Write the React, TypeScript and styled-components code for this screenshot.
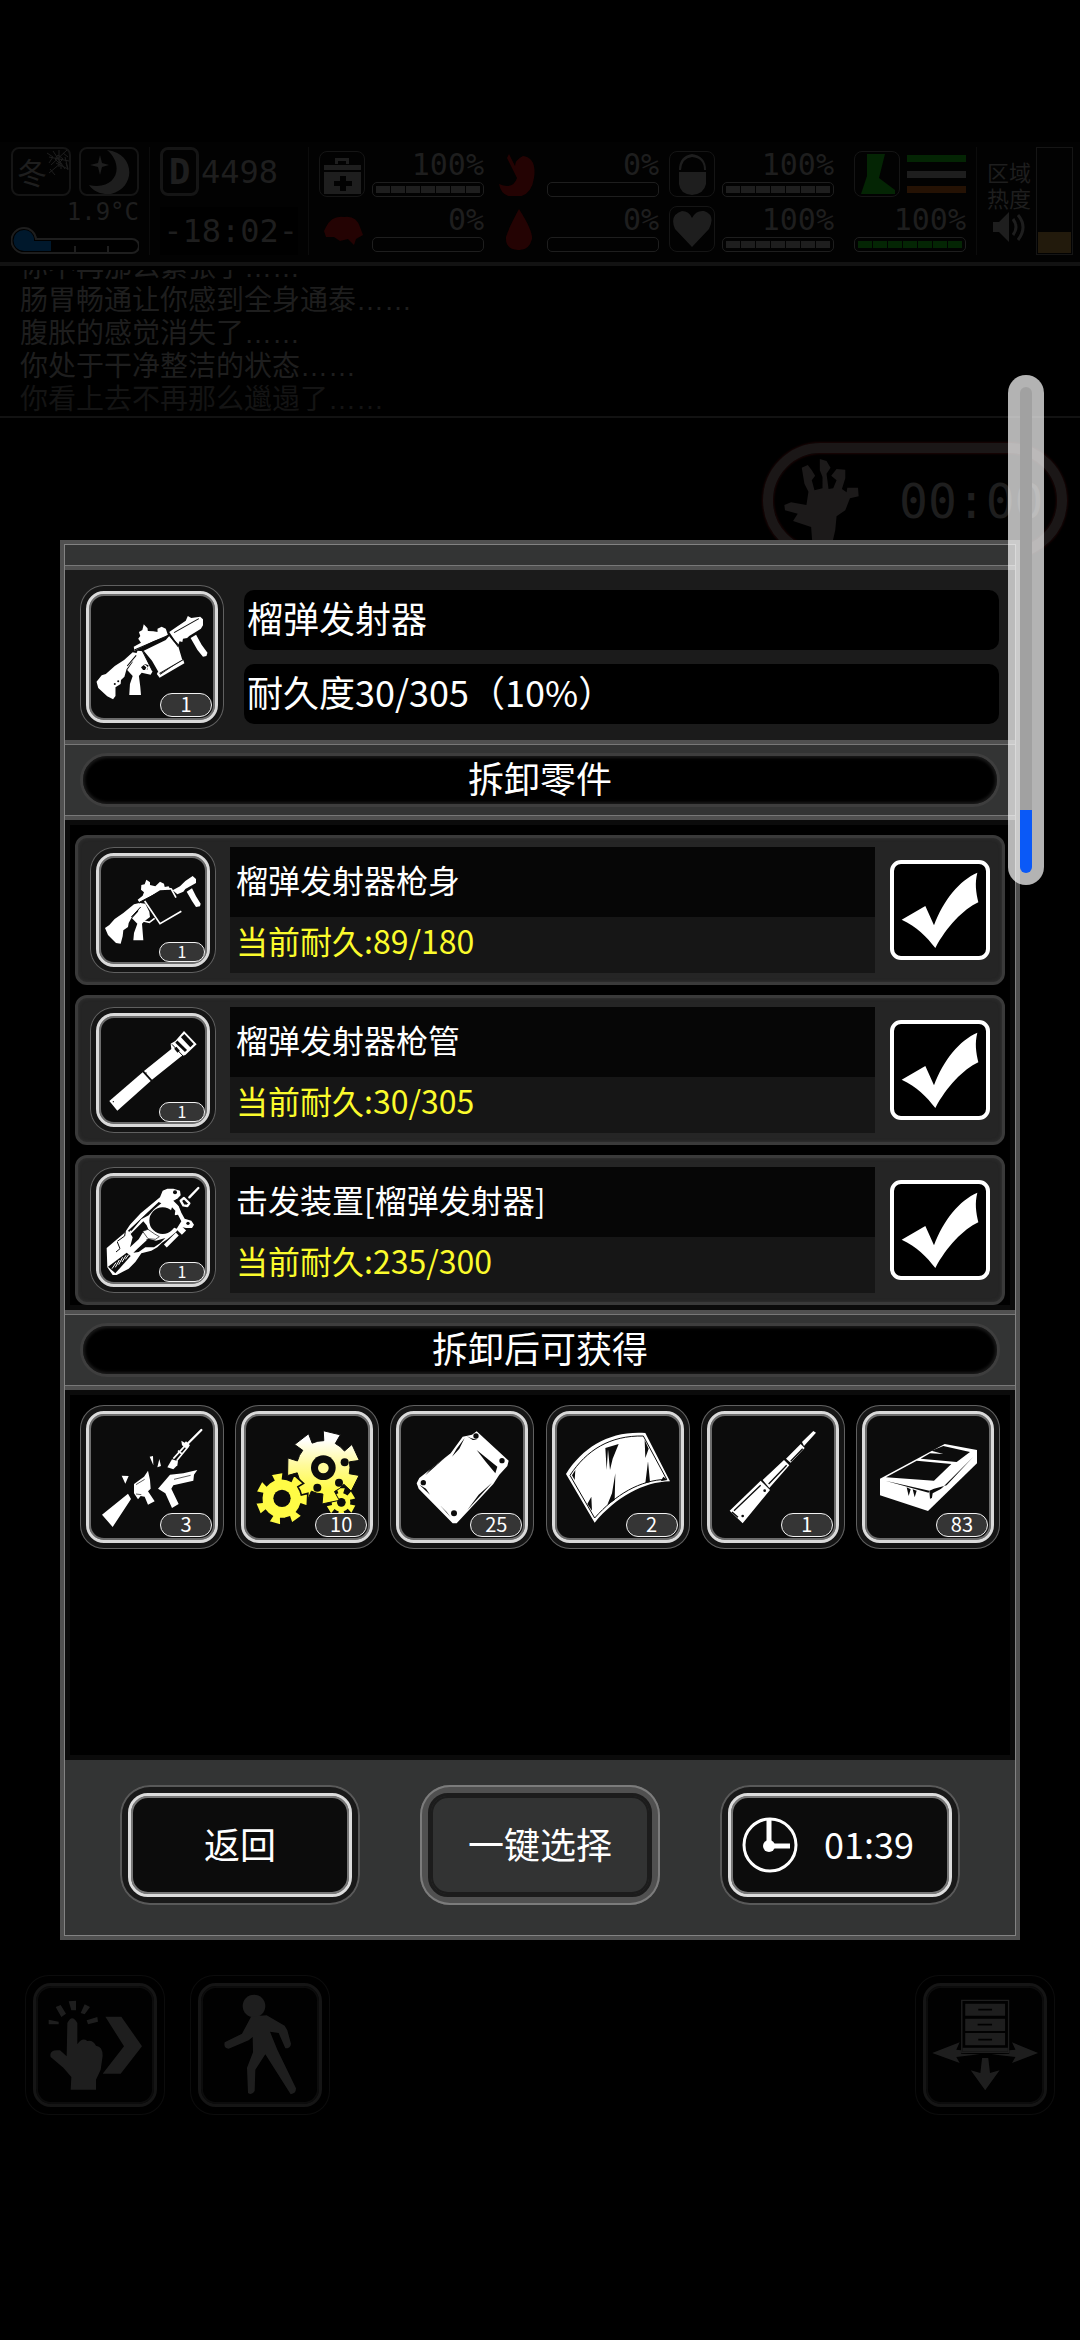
import React, { useState } from "react";
import styled, { createGlobalStyle, css } from "styled-components";

const GlobalStyle = createGlobalStyle`
  *, *::before, *::after { box-sizing: border-box; }
  html, body { margin: 0; background: #000; }
  body { font-family: "Noto Sans CJK SC", sans-serif; color: #fff; }
  button { font: inherit; color: inherit; border: 0; padding: 0; background: none; }
`;

const DIM = "#1e1e1e";
const LINE = "#151515";
const RED = "#240303";
const GREEN = "#042504";

/* ---------- scene behind the dialog ---------- */

const Page = styled.div`
  position: relative;
  min-height: 100vh;
  overflow: hidden;
`;

const Scene = styled.div`
  min-height: 100vh;
  display: flex;
  flex-direction: column;
  padding-top: 142px;
  color: ${DIM};
`;

const Hud = styled.header`
  display: flex;
  gap: 10px;
  height: 124px;
  padding: 5px 7px 7px 11px;
  background: #020202;
  border-bottom: 4px solid #121212;
`;

const Divider = styled.div`
  width: 1px;
  background: #0c0c0c;
`;

const Column = styled.div<{ $width: number }>`
  width: ${(p) => p.$width}px;
  display: flex;
  flex-direction: column;
  justify-content: space-between;
`;

const Row = styled.div<{ $gap?: number; $top?: boolean }>`
  display: flex;
  align-items: ${(p) => (p.$top ? "flex-start" : "center")};
  gap: ${(p) => p.$gap ?? 0}px;
`;

const Tile = styled.div<{ $width: number; $border?: number }>`
  width: ${(p) => p.$width}px;
  height: 49px;
  display: grid;
  border: ${(p) => p.$border ?? 2}px solid ${LINE};
  border-radius: 8px;
  line-height: 44px;
  > * { grid-area: 1 / 1; }
`;

const Season = styled.span`
  font-size: 30px;
  padding-left: 4px;
`;

const Lcd = styled.span<{ $size: number }>`
  font-family: "DejaVu Sans Mono", monospace;
  font-size: ${(p) => p.$size}px;
  line-height: 28px;
  text-align: right;
`;

const DayMark = styled(Lcd)`
  font-weight: bold;
  line-height: 44px;
  text-align: center;
`;

const Clock = styled.div`
  display: flex;
  flex-direction: column;
  justify-content: center;
  height: 48px;
  background: #000;
`;

const StatColumn = styled.div<{ $width: number }>`
  width: ${(p) => p.$width}px;
  display: flex;
  flex-direction: column;
  gap: 9px;
  padding-top: 4px;
`;

const StatBox = styled.div`
  display: flex;
  gap: 7px;
  height: 46px;
`;

const StatIcon = styled.div<{ $framed?: boolean; $color?: string }>`
  width: 46px;
  display: grid;
  color: ${(p) => p.$color ?? DIM};
  border: 1px solid ${(p) => (p.$framed ? LINE : "transparent")};
  border-radius: 8px;
`;

const StatBody = styled.div`
  flex: 1;
  display: flex;
  flex-direction: column;
  justify-content: space-between;
`;

const Gauge = styled.div`
  height: 15px;
  padding: 3px;
  display: flex;
  gap: 1px;
  border: 1px solid ${DIM};
  border-radius: 5px;
`;

const Cell = styled.i<{ $color: string }>`
  flex: 1;
  background: ${(p) => p.$color};
`;

const Stripes = styled.div`
  flex: 1;
  display: flex;
  flex-direction: column;
  justify-content: space-between;
  padding: 4px 0;
`;

const Stripe = styled.i<{ $color: string }>`
  height: 7px;
  background: ${(p) => p.$color};
`;

const Leg = styled(StatColumn)`
  margin-left: 10px;
`;

const Heat = styled.div`
  width: 44px;
  padding-top: 11px;
  display: flex;
  flex-direction: column;
  align-items: center;
  font-size: 22px;
  line-height: 26px;
`;

const Meter = styled.div`
  width: 37px;
  height: 108px;
  display: flex;
  align-items: flex-end;
  padding: 1px;
  border: 1px solid ${LINE};
`;

const MeterFill = styled.i`
  flex: 1;
  height: 20%;
  background: #221a0c;
`;

const Log = styled.div`
  height: 146px;
  margin-top: 4px;
  padding-left: 20px;
  overflow: hidden;
  display: flex;
  flex-direction: column;
  justify-content: flex-end;
  font-family: "Liberation Sans", "Noto Sans CJK SC", sans-serif;
  font-size: 28px;
  line-height: 33px;
`;

const LogLine = styled.div<{ $faded?: boolean }>`
  flex: none;
  color: ${(p) => (p.$faded ? "#141414" : DIM)};
`;

const Rule = styled.div`
  height: 2px;
  background: #121212;
`;

const Alarm = styled.div`
  align-self: flex-end;
  display: flex;
  align-items: center;
  gap: 39px;
  width: 304px;
  height: 115px;
  margin: 25px 13px 0 0;
  padding-left: 10px;
  border: 10px solid #1b1717;
  border-radius: 58px;
  box-shadow: 0 0 2px 1px #1c0505, inset 0 0 2px 1px #1c0505;
`;

const Toolbar = styled.nav`
  display: flex;
  gap: 25px;
  margin-top: auto;
  padding: 0 25px 225px;
  > :last-child { margin-left: auto; }
`;

/* ---------- framed tiles and buttons ---------- */

const Frame = styled.span<{ $dim?: boolean }>`
  margin: ${(p) => (p.$dim ? 8 : 6)}px;
  border: 3px solid ${(p) => (p.$dim ? "#151515" : "#dadada")};
  border-radius: 18px;
  background: ${(p) => (p.$dim ? "#010101" : "#0c0c0c")};
  box-shadow: inset 0 0 0 2px ${(p) => (p.$dim ? "#0c0c0c" : "#6c6c6c")};
`;

const SlotBox = styled.button<{ $size: number; $dim?: boolean }>`
  flex: none;
  width: ${(p) => p.$size}px;
  height: ${(p) => p.$size}px;
  display: grid;
  border-radius: 24px;
  background: ${(p) => (p.$dim ? "#000" : "#151515")};
  box-shadow: inset 0 0 0 ${(p) => (p.$dim ? "1px #0c0c0c" : "1px #606060")};
  > * { grid-area: 1 / 1; }
`;

const Badge = styled.span<{ $small?: boolean }>`
  place-self: end;
  margin: ${(p) => (p.$small ? 11 : 12)}px;
  width: ${(p) => (p.$small ? 46 : 52)}px;
  height: ${(p) => (p.$small ? 20 : 24)}px;
  border: 1px solid #f2f2f2;
  border-radius: 12px;
  background: #353535;
  font-size: ${(p) => (p.$small ? 16 : 20)}px;
  line-height: ${(p) => (p.$small ? 16 : 20)}px;
  text-align: center;
`;

const Art = styled.svg`
  display: block;
  width: 100%;
  height: 100%;
`;

/* ---------- dialog ---------- */

const ModalLayer = styled.div`
  position: absolute;
  inset: 0;
  padding: 540px 60px 0;
`;

const Dialog = styled.section`
  border: 4px solid #505050;
  padding: 1px;
  background: #828282;
`;

const TopBar = styled.div`
  height: 25px;
  background: #333434;
  border-bottom: 4px solid #505050;
  box-shadow: inset 0 -1px #787878;
`;

const Info = styled.div`
  display: flex;
  align-items: center;
  gap: 20px;
  padding: 15px 16px 11px 15px;
  background: #1b1b1b;
`;

const Fields = styled.div`
  flex: 1;
  display: flex;
  flex-direction: column;
  gap: 14px;
`;

const Field = styled.div`
  height: 60px;
  padding-left: 3px;
  border-radius: 10px;
  background: #000;
  font-size: 36px;
  line-height: 54px;
`;

const Band = styled.div`
  padding: 9px 15px;
  background: #333434;
  border: solid #505050;
  border-width: 4px 0;
  box-shadow: inset 0 1px #787878, inset 0 -1px #787878;
`;

const Heading = styled.h2`
  margin: 0;
  height: 54px;
  border: 3px solid #3e3e3e;
  border-radius: 27px;
  background: #000;
  box-shadow: inset 0 0 3px 2px #1a1a1a;
  font-size: 36px;
  font-weight: 400;
  line-height: 43px;
  text-align: center;
`;

const inset = css`
  background: #000;
  box-shadow: inset 0 0 0 5px #0b0b0b;
`;

const PartList = styled.ul`
  ${inset}
  list-style: none;
  margin: 0;
  padding: 15px 10px 5px;
  display: flex;
  flex-direction: column;
  gap: 10px;
`;

const Part = styled.li`
  display: flex;
  align-items: center;
  height: 150px;
  padding: 0 12px;
  border: 3px solid #3a3a3a;
  border-radius: 12px;
  background: #252525;
  box-shadow: inset 0 0 3px 1px #2f2f2f;
`;

const PartText = styled.div`
  flex: 1;
  margin: 0 15px 0 14px;
  font-size: 32px;
  > * { display: block; padding-left: 6px; }
`;

const PartName = styled.label`
  height: 70px;
  line-height: 65px;
  background: #060606;
`;

const PartWear = styled.span`
  height: 56px;
  line-height: 47px;
  background: #161616;
  color: #fbfb2c;
`;

const Tick = styled.span`
  display: grid;
  width: 100px;
  height: 100px;
  > * { grid-area: 1 / 1; pointer-events: none; }
`;

const Box = styled.input`
  && { pointer-events: auto; }
  appearance: none;
  margin: 0;
  border: 4px solid #fff;
  border-radius: 11px;
  background: #000;
  &:not(:checked) + svg { visibility: hidden; }
`;

const Loot = styled.div`
  ${inset}
  min-height: 370px;
  padding: 15px;
  display: grid;
  grid-template-columns: repeat(6, 144px);
  justify-content: space-between;
  align-content: start;
`;

const Footer = styled.footer`
  display: flex;
  justify-content: center;
  gap: 60px;
  padding: 25px 0 30px;
  background: #333434;
`;

const ActionBox = styled.button<{ $muted?: boolean }>`
  width: 240px;
  height: 120px;
  display: grid;
  padding: 8px;
  border-radius: 30px;
  font-size: 36px;
  line-height: 48px;
  background: ${(p) => (p.$muted ? "#505050" : "#191919")};
  box-shadow: inset 0 0 0 2px ${(p) => (p.$muted ? "#7c7c7c" : "#595959")};
`;

const ActionFace = styled.span<{ $muted?: boolean; $start?: boolean }>`
  display: flex;
  align-items: center;
  justify-content: ${(p) => (p.$start ? "flex-start" : "center")};
  gap: 26px;
  padding-left: ${(p) => (p.$start ? 11 : 0)}px;
  border: 3px solid ${(p) => (p.$muted ? "#1c1c1c" : "#dcdcdc")};
  border-radius: 20px;
  background: ${(p) => (p.$muted ? "#323333" : "#0c0c0c")};
  box-shadow: inset 0 0 0 2px ${(p) => (p.$muted ? "#1c1c1c" : "#777")};
`;

const ActionText = styled.span`
  padding-bottom: 5px;
`;

/* ---------- volume overlay ---------- */

const Volume = styled.label`
  position: absolute;
  top: 375px;
  right: 36px;
  padding: 12px;
  border-radius: 18px;
  background: rgba(255, 255, 255, 0.7);
`;

const VolumeInput = styled.input`
  appearance: none;
  display: block;
  margin: 0;
  width: 12px;
  height: 486px;
  border-radius: 6px;
  writing-mode: vertical-lr;
  direction: rtl;
  background: linear-gradient(to top, #0a59f7 13%, #a1a1a1 13%);
  &::-webkit-slider-thumb {
    appearance: none;
    width: 12px;
    height: 12px;
    background: transparent;
  }
`;

/* ---------- drawings ---------- */

type ArtProps = { box: string; children: React.ReactNode; stretch?: boolean };
const Drawing = ({ box, children, stretch }: ArtProps) => (
  <Art viewBox={box} preserveAspectRatio={stretch ? "none" : "xMidYMid meet"} fill="currentColor" aria-hidden="true">
    {children}
  </Art>
);

const gear = (cx: number, cy: number, inner: number, outer: number, teeth: number, turn: number) => {
  const step = (Math.PI * 2) / teeth;
  const at = (r: number, a: number) => `${(cx + r * Math.cos(a)).toFixed(1)},${(cy + r * Math.sin(a)).toFixed(1)}`;
  const points: string[] = [];
  for (let i = 0; i < teeth; i++) {
    const a = turn + i * step;
    points.push(at(inner, a - step * 0.25), at(outer, a - step * 0.27), at(outer, a + step * 0.27), at(inner, a + step * 0.25), at(inner, a + step * 0.5));
  }
  return points.join(" ");
};

const Launcher = () => (
  <Drawing box="87 165 418 432" stretch>
    <path d="M135 455 150 436 162 432 188 408 215 390 240 367 254 370 252 384 236 398 222 418 216 440 206 450 205 462 190 472 190 498 183 508 166 499 140 474Z" />
    <path d="M254 362 270 364 284 396 298 424 292 434 266 428 258 438 262 470 264 495 230 495 232 462 240 438 224 420 240 396Z" />
    <path d="M243 350 264 338 256 326 262 318 258 306 268 300 272 283 283 295 284 303 300 304 312 306 312 296 324 290 336 296 342 314 335 320 300 334 245 362Z" />
    <path d="M272 362 336 330 346 318 358 334 372 348 384 390 318 432 296 392Z" />
    <path d="M386 388 390 400 318 443 310 432 314 424 320 434Z" />
    <path d="M346 306 366 292 394 272 400 258 410 264 436 260 444 268 444 286 438 296 404 318 398 324 386 326 384 336 376 334 372 346Z" />
    <path d="M408 324 424 314 440 344 457 368 454 378 444 380 428 360Z" />
    <g stroke="#0c0c0c" strokeWidth="3" fill="none">
      <path d="M245 360 345 315 376 348M352 322 372 350M360 308 432 266M268 362 298 424M318 430 388 388M224 408 250 376" />
    </g>
    <g fill="#0c0c0c">
      <path d="M264 412 276 402 286 406 282 420 270 420Z" />
      <circle cx="188" cy="462" r="3" /><circle cx="198" cy="454" r="3" />
    </g>
    <path d="M274 404 282 412 276 424" stroke="currentColor" strokeWidth="4" fill="none" />
  </Drawing>
);

const LauncherBody = () => (
  <Drawing box="90 82 378 378">
    <path d="M135 325 148 316 164 298 190 280 222 254 238 250 244 260 218 288 206 310 204 322 190 332 188 350 182 372 168 370 144 346Z" />
    <path d="M240 250 256 252 268 276 270 292 254 304 246 312 250 362 220 362 222 340 232 312 216 296 234 276Z" />
    <path d="M233 240 248 228 252 218 243 210 244 196 254 194 259 180 270 188 270 196 286 200 300 186 312 192 314 202 326 200 330 210 300 212 268 232 238 248Z" />
    <path d="M312 204 334 208 348 234M254 244 300 312 364 275M250 304 268 308 284 296" fill="none" stroke="currentColor" strokeWidth="5" />
    <path d="M338 212 360 200 376 184 398 169 408 178 408 190 376 208 370 216 352 224Z" />
    <path d="M380 216 396 206 408 230 422 252 420 260 408 262 396 244Z" />
    <path d="M214 292 242 262M238 248 292 220" stroke="#0c0c0c" strokeWidth="3" />
  </Drawing>
);

const Barrel = () => (
  <Drawing box="90 562 378 378">
    <path d="M148 844 248 758 272 784 172 873Z" />
    <path d="M252 754 334 688 332 672 346 664 372 634 410 674 376 706 364 710 276 780Z" />
    <g stroke="#0c0c0c" fill="none">
      <path d="M336 674 370 710" strokeWidth="3" />
      <path d="M349 666 378 694M346 684 356 696" strokeWidth="9" />
      <path d="M368 648 396 678" strokeWidth="14" />
    </g>
    <circle cx="160" cy="846" r="2" fill="#0c0c0c" /><circle cx="258" cy="760" r="2" fill="#0c0c0c" />
  </Drawing>
);

const Trigger = () => (
  <Drawing box="30 21 378 378">
    <path d="M80 264 134 218 150 194 182 160 240 112 248 92 262 86 280 86 300 92 302 106 292 116 280 122 296 138 304 158 314 176 334 182 342 194 336 204 318 204 300 200 288 216 262 238 246 248 232 262 214 272 184 280 166 306 146 326 110 345 98 345 82 322Z" />
    <g fill="#0c0c0c">
      <ellipse cx="248" cy="182" rx="40" ry="40" />
      <path d="M276 142 286 152 284 166 294 164 304 184 290 206 276 200 270 160ZM288 118 302 120 308 140 298 142Z" />
      <path d="M144 212 236 126 244 130 222 148 206 166 184 178 150 218Z" />
      <path d="M152 222 190 184 200 196 206 210 188 218 176 238 150 262 158 232Z" />
      <path d="M206 236 228 242 256 234 240 250 222 262 196 262 176 276 160 278 196 240Z" />
      <path d="M84 320 140 278 152 288 106 340Z" />
      <circle cx="285" cy="97" r="6" /><circle cx="324" cy="190" r="5" />
    </g>
    <path d="M112 244 134 228 136 214M112 246 120 266 108 276" fill="none" stroke="#0c0c0c" strokeWidth="3" />
    <path d="M188 214 204 208 224 222 238 230 226 238 204 236Z" stroke="#0c0c0c" strokeWidth="2" />
    <g stroke="currentColor" fill="none">
      <path d="M146 208 240 118" strokeWidth="3" />
      <path d="M140 226 154 212" strokeWidth="4" />
      <path d="M150 278 196 236" strokeWidth="12" />
      <path d="M256 258 292 222" strokeWidth="12" />
      <path d="M296 202 312 218" strokeWidth="18" />
      <path d="M96 326 108 308M106 322 118 300M116 314 128 292M126 306 138 286M136 298 146 284" strokeWidth="3" />
      <path d="M328 112 355 84" strokeWidth="7" strokeLinecap="round" />
      <path d="M302 122 312 114 328 130 322 138 310 136Z" strokeWidth="7" strokeLinejoin="round" />
    </g>
  </Drawing>
);

const BrokenGun = () => (
  <Drawing box="60 315 432 432">
    <path d="M126 644 204 581 213 597 158 681ZM185 527 206 528 196 551ZM269 470 279 468 280 496ZM298 477 303 498 292 502Z" />
    <path d="M222 552 252 530 264 512 270 540 272 566 264 574 284 604 264 614 254 590 242 588 234 598 222 580Z" />
    <path d="M294 566 330 524 370 520 412 510 402 524 400 542 340 556 334 566 356 612 336 624 316 580Z" />
    <path d="M322 502 336 478 354 484 352 496 340 508Z" />
    <path d="M340 476 376 436M350 482 386 438M354 452 366 462" stroke="currentColor" strokeWidth="5" />
    <path d="M364 422 374 428 378 424 390 436 380 446 366 436Z" />
    <path d="M382 432 424 390" stroke="currentColor" strokeWidth="7" strokeLinecap="round" />
    <path d="M342 538 392 526M228 554 254 538M228 582 244 584" stroke="#0c0c0c" strokeWidth="2" />
  </Drawing>
);

const Gears = () => (
  <Drawing box="60 315 432 432">
    <defs>
      <linearGradient id="brass" gradientUnits="userSpaceOnUse" x1="0" y1="400" x2="0" y2="590">
        <stop offset="0.1" stopColor="#fff" /><stop offset="0.5" stopColor="#fffa9a" /><stop offset="0.9" stopColor="#fffb45" />
      </linearGradient>
    </defs>
    <g transform="translate(-465 0)">
      <polygon points={gear(843, 607, 28, 44, 6, 0.5)} fill="#fffb45" />
      <circle cx="844" cy="607" r="13" fill="#0c0c0c" />
      <polygon points={gear(790, 502, 80, 110, 7, -1.33)} fill="url(#brass)" stroke="#0c0c0c" strokeWidth="3" />
      <g fill="#0c0c0c">
        <circle cx="790" cy="503" r="37" /><circle cx="854" cy="487" r="12" />
        <circle cx="837" cy="548" r="12" /><circle cx="772" cy="563" r="12" />
      </g>
      <circle cx="790" cy="504" r="16" fill="#fffa9a" />
      <polygon points={gear(665, 596, 60, 80, 7, -1.75)} fill="#fffb45" stroke="#0c0c0c" strokeWidth="5" />
      <circle cx="666" cy="595" r="26" fill="#0c0c0c" />
    </g>
  </Drawing>
);

const Plate = () => (
  <Drawing box="990 315 432 432">
    <path d="M1070 550 1078 534 1172 460 1208 410 1236 404 1250 394 1346 482 1342 498 1318 524 1300 552 1190 670 1178 670 1076 566Z" />
    <g fill="#0c0c0c">
      <circle cx="1090" cy="548" r="8" /><circle cx="1248" cy="408" r="8" />
      <circle cx="1326" cy="482" r="8" /><circle cx="1182" cy="640" r="9" />
      <path d="M1250 450 1312 500 1306 520 1276 484ZM1214 414 1198 446 1176 470 1190 446ZM1154 474 1096 526 1112 506ZM1220 408 1238 420 1252 420 1232 414ZM1078 554 1110 584 1098 566ZM1140 616 1172 652 1160 636ZM1296 548 1222 630 1256 584Z" />
    </g>
  </Drawing>
);

const Sheet = () => (
  <Drawing box="48 315 432 432">
    <path d="M108 522C160 440 240 392 346 399L420 544C340 546 260 590 194 668Z" />
    <path d="M120 526C170 450 240 406 340 408L410 538C330 540 256 584 194 654Z" fill="none" stroke="#0c0c0c" strokeWidth="3" />
    <path d="M226 444 266 432 248 476 240 510 234 448 230 510ZM256 520 254 600 232 614 246 580ZM344 420 356 446 346 474ZM354 484 360 546 346 550ZM126 526 136 510 134 540ZM184 590 186 632 172 612ZM400 530 412 540 392 544Z" fill="#0c0c0c" />
  </Drawing>
);

const Tube = () => (
  <Drawing box="513 315 432 432">
    <path d="M599 632 692 542 720 570 638 670ZM698 540 762 480 778 496 718 564ZM768 476 812 432 824 444 782 488ZM816 426 850 393 858 398 822 438Z" />
    <path d="M612 632 692 556M606 636 624 652M716 552 770 496M782 484 818 446" fill="none" stroke="#0c0c0c" strokeWidth="4" />
    <circle cx="704" cy="572" r="4" fill="#0c0c0c" /><circle cx="638" cy="648" r="4" fill="#0c0c0c" />
  </Drawing>
);

const Ingot = () => (
  <Drawing box="978 315 432 432">
    <path d="M1050 536 1244 432 1341 450 1341 490 1194 633 1050 586Z" />
    <g fill="#0c0c0c">
      <path d="M1068 532 1160 482 1264 492 1212 542ZM1172 476 1200 460 1240 462 1204 452 1240 438 1320 456 1280 486Z" />
      <path d="M1212 566 1250 556 1330 470 1206 594 1200 596 1198 572ZM1066 542 1198 572 1196 578ZM1130 562 1136 588 1142 568ZM1148 568 1154 592 1160 572Z" />
    </g>
    <path d="M1208 580 1250 558 1204 606Z" />
  </Drawing>
);

const Walker = () => (
  <Drawing box="420 706 420 420">
    <circle cx="612" cy="799" r="34" />
    <path d="M604 830 650 827 704 858 712 872 723 912Q722 926 706 926L686 880 660 876 682 930 738 1046Q738 1062 722 1064L646 944 616 990 614 1054Q606 1068 594 1060L591 984 609 938 608 892 596 902 536 927Q520 926 524 908L576 882Z" />
  </Drawing>
);

const Tap = () => (
  <Drawing box="-75 706 420 420">
    <path d="M52 850Q66 822 82 850L82 914Q96 892 112 904 128 900 138 918 158 920 158 948L152 990 138 1020 138 1050 62 1050 64 1012 40 984 2 952Q-4 928 30 932L50 950Z" />
    <path d="M166 831 214 831 276 920 212 1002 158 1002 222 920ZM56 785 78 783 78 812 64 812ZM17 802 32 796 48 822 34 832ZM104 794 120 802 104 824 92 820ZM110 842 142 832 144 846 114 854ZM-4 840 26 846 26 854-4 854Z" />
  </Drawing>
);

const Cabinet = () => (
  <Drawing box="1088 706 407 420" stretch>
    <path d="M1224 782H1360V938H1224Z" fill="none" stroke="currentColor" strokeWidth="4" />
    <path d="M1234 792H1350V828H1234ZM1234 837H1350V874H1234ZM1234 880H1350V917H1234ZM1226 924H1358V936H1226Z" />
    <path d="M1272 810H1312M1270 855H1312M1272 900H1312" stroke="#000" strokeWidth="5" />
    <path d="M1138 940 1218 908 1208 930 1222 932 1222 942 1276 944 1208 952 1218 970ZM1446 940 1370 908 1380 930 1362 932 1362 942 1310 944 1380 952 1370 970ZM1283 955H1301L1306 1000 1334 992 1292 1052 1250 992 1278 1000Z" />
  </Drawing>
);

const Tickmark = () => (
  <Drawing box="1050 120 300 300">
    <path d="M1085 299 1156 258 1182 316C1210 240 1260 180 1312 158 1304 190 1308 216 1315 247 1270 268 1220 320 1186 384 1160 350 1130 320 1085 299Z" />
  </Drawing>
);

const ClockFace = () => (
  <svg width="56" height="56" viewBox="0 0 56 56" aria-hidden="true" fill="none" stroke="#fff">
    <circle cx="28" cy="28" r="26" strokeWidth="3" />
    <path d="M27 2V28" strokeWidth="5" /><path d="M27 29H48" strokeWidth="5" />
    <circle cx="27" cy="29" r="6" fill="#fff" stroke="none" />
  </svg>
);

const Snow = () => (
  <svg width="56" height="45" viewBox="0 0 56 45" fill="none" stroke={DIM} strokeWidth="1" aria-hidden="true">
    <path d="M36 8 56 12M40 2 52 20M54 1 38 16M34 4 40 8 36 14M46 1 46 18M50 4 55 8M43 14 55 20 52 8M36 24 48 14M37 20 42 26M48 14V20M53 14 55 21M45 6 50 10 46 14 42 10Z" />
  </svg>
);

const Moon = () => (
  <svg width="56" height="45" viewBox="0 0 56 45" fill={DIM} aria-hidden="true">
    <path d="M26 1C54 4 56 38 30 45 20 46 12 42 8 36 36 42 44 16 26 1ZM19 6 21 14 28 16 21 18 19 26 17 18 9 16 17 14Z" />
  </svg>
);

const Thermometer = () => (
  <svg width="128" height="28" viewBox="0 0 128 28" aria-hidden="true">
    <path d="M13 1A12 12 0 0 1 25 12H121A6 6 0 0 1 121 26H13A12 12 0 0 1 13 1Z" fill="#000" stroke={DIM} strokeWidth="2" />
    <path d="M13 3A10 10 0 0 1 23 14H40V24H13A10 10 0 0 1 13 3Z" fill="#00182c" />
    <path d="M64 19V25M97 19V25" stroke={DIM} strokeWidth="2" />
  </svg>
);

const statArt: Record<string, React.ReactNode> = {
  kit: <path d="M4 13H41V18H4ZM4 20H41V42H4ZM15 12V6H29V12H26V9H18V12ZM20 24V29H14V34H20V39H26V34H32V29H26V24Z" fillRule="evenodd" />,
  brain: <path d="M6 20Q12 8 24 10 36 8 40 20L43 28 36 32 34 38 28 32 20 34 14 30 6 30 4 24ZM12 20 20 18M24 16 32 22M18 26 30 28" />,
  stomach: <path d="M14 2 20 14Q20 8 28 4 42 6 39 26 36 46 18 45 6 44 4 32 18 38 22 26 18 18 12 6Z" />,
  drop: <path d="M24 2Q38 24 37 32 34 44 23 43 10 42 11 30 14 20 24 2Z" />,
  pill: <path d="M9 20H36V32Q34 42 22 43 10 42 9 32ZM9 18Q9 4 22 2 36 4 36 18H34Q34 6 22 5 12 6 11 18Z" />,
  heart: <path d="M22 40 5 22Q-1 8 12 4 19 4 22 11 26 3 34 4 46 8 39 22ZM32 7Q39 10 36 20 36 10 32 7Z" />,
  foot: <path d="M12 2H30L24 26 40 38V42H6L12 24Z" />,
};

const Stat = ({ icon, value, color = DIM, framed, label }: { icon?: string; value: number; color?: string; framed?: boolean; label: string }) => (
  <StatBox aria-label={label}>
    {icon && (
      <StatIcon $framed={framed} $color={icon === "brain" || icon === "stomach" || icon === "drop" ? RED : color}>
        <Drawing box="0 0 44 44">{statArt[icon]}</Drawing>
      </StatIcon>
    )}
    <StatBody>
      <Lcd $size={30}>{value}%</Lcd>
      <Gauge>{value > 0 && Array.from({ length: 7 }, (_, i) => <Cell key={i} $color={color} />)}</Gauge>
    </StatBody>
  </StatBox>
);

const Hand = () => (
  <svg width="77" height="95" viewBox="370 268 230 285" preserveAspectRatio="none" fill="#1c1a1a" aria-hidden="true">
    <path d="M426 312 444 304 456 320 466 336 456 350 464 380 488 374 488 340 480 320 480 286 500 292 512 312 500 330 506 376 520 374 530 350 514 336 530 316 556 318 556 344 546 376 560 386 562 372 594 372 596 398 570 404 556 440 530 458 526 500 510 570 460 570 454 490 400 472 414 450 376 440 374 424 394 416 440 424 446 384 434 360Z" />
  </svg>
);

const Slot = ({ children, count, size = 144, label }: { children: React.ReactNode; count: number; size?: number; label: string }) => (
  <SlotBox type="button" $size={size} aria-label={label}>
    <Frame />
    {children}
    <Badge $small={size < 144}>{count}</Badge>
  </SlotBox>
);

const parts = [
  { id: "body", name: "榴弹发射器枪身", wear: "89/180", art: <LauncherBody /> },
  { id: "barrel", name: "榴弹发射器枪管", wear: "30/305", art: <Barrel /> },
  { id: "trigger", name: "击发装置[榴弹发射器]", wear: "235/300", art: <Trigger /> },
];

const loot = [
  { label: "枪械零件", count: 3, art: <BrokenGun /> },
  { label: "齿轮", count: 10, art: <Gears /> },
  { label: "金属片", count: 25, art: <Plate /> },
  { label: "钢板", count: 2, art: <Sheet /> },
  { label: "钢管", count: 1, art: <Tube /> },
  { label: "金属锭", count: 83, art: <Ingot /> },
];

const log = ["你不再那么紧张了……", "肠胃畅通让你感到全身通泰……", "腹胀的感觉消失了……", "你处于干净整洁的状态……", "你看上去不再那么邋遢了……"];

export default function App() {
  const [checked, setChecked] = useState<Record<string, boolean>>({ body: true, barrel: true, trigger: true });
  const selectAll = () => setChecked({ body: true, barrel: true, trigger: true });

  return (
    <Page>
      <GlobalStyle />
      <Scene>
        <Hud>
          <Column $width={128}>
            <Row $gap={8}>
              <Tile $width={60}><Season>冬</Season><Snow /></Tile>
              <Tile $width={60}><Moon /></Tile>
            </Row>
            <Lcd $size={24}>1.9°C</Lcd>
            <Thermometer />
          </Column>
          <Divider />
          <Column $width={138}>
            <Row $gap={2}>
              <Tile $width={39} $border={3}><DayMark $size={36}>D</DayMark></Tile>
              <Lcd $size={32}>4498</Lcd>
            </Row>
            <Clock><Lcd $size={32}>-18:02-</Lcd></Clock>
          </Column>
          <Divider />
          <StatColumn $width={165}>
            <Stat icon="kit" value={100} framed label="健康" />
            <Stat icon="brain" value={0} label="精神" />
          </StatColumn>
          <StatColumn $width={165}>
            <Stat icon="stomach" value={0} label="肠胃" />
            <Stat icon="drop" value={0} label="失血" />
          </StatColumn>
          <StatColumn $width={165}>
            <Stat icon="pill" value={100} framed label="药物" />
            <Stat icon="heart" value={100} framed label="心情" />
          </StatColumn>
          <Leg $width={112}>
            <StatBox>
              <StatIcon $framed $color={GREEN}><Drawing box="0 0 44 44">{statArt.foot}</Drawing></StatIcon>
              <Stripes>
                <Stripe $color={GREEN} /><Stripe $color={DIM} /><Stripe $color="#251204" />
              </Stripes>
            </StatBox>
            <Stat value={100} color={GREEN} label="体力" />
          </Leg>
          <Divider />
          <Row $gap={5} $top>
            <Heat>
              <span>区域热度</span>
              <svg width="34" height="34" viewBox="0 0 34 34" fill={DIM} aria-hidden="true">
                <path d="M1 12H7L17 2V32L7 22H1Z" />
                <path d="M21 9Q27 17 21 25M26 5Q36 17 26 30" fill="none" stroke={DIM} strokeWidth="3" />
              </svg>
            </Heat>
            <Meter><MeterFill /></Meter>
          </Row>
        </Hud>
        <Log>
          {log.map((line, i) => <LogLine key={line} $faded={i === log.length - 1}>{line}</LogLine>)}
        </Log>
        <Rule />
        <Alarm><Hand /><Lcd $size={48}>00:00</Lcd></Alarm>
        <Toolbar>
          <SlotBox type="button" $size={140} $dim aria-label="快速互动"><Frame $dim /><Tap /></SlotBox>
          <SlotBox type="button" $size={140} $dim aria-label="行走"><Frame $dim /><Walker /></SlotBox>
          <SlotBox type="button" $size={140} $dim aria-label="储物"><Frame $dim /><Cabinet /></SlotBox>
        </Toolbar>
      </Scene>

      <ModalLayer>
        <Dialog role="dialog" aria-label="拆卸零件">
          <TopBar />
          <Info>
            <Slot count={1} label="榴弹发射器"><Launcher /></Slot>
            <Fields>
              <Field>榴弹发射器</Field>
              <Field>耐久度30/305（10%）</Field>
            </Fields>
          </Info>
          <Band><Heading>拆卸零件</Heading></Band>
          <PartList>
            {parts.map((part) => (
              <Part key={part.id}>
                <Slot count={1} size={126} label={part.name}>{part.art}</Slot>
                <PartText>
                  <PartName htmlFor={part.id}>{part.name}</PartName>
                  <PartWear>当前耐久:{part.wear}</PartWear>
                </PartText>
                <Tick>
                  <Box
                    id={part.id}
                    type="checkbox"
                    checked={checked[part.id]}
                    onChange={(e) => setChecked({ ...checked, [part.id]: e.target.checked })}
                  />
                  <Tickmark />
                </Tick>
              </Part>
            ))}
          </PartList>
          <Band><Heading>拆卸后可获得</Heading></Band>
          <Loot>
            {loot.map((item) => <Slot key={item.label} count={item.count} label={item.label}>{item.art}</Slot>)}
          </Loot>
          <Footer>
            <ActionBox type="button"><ActionFace><ActionText>返回</ActionText></ActionFace></ActionBox>
            <ActionBox type="button" $muted onClick={selectAll}><ActionFace $muted><ActionText>一键选择</ActionText></ActionFace></ActionBox>
            <ActionBox type="button"><ActionFace $start><ClockFace /><ActionText>01:39</ActionText></ActionFace></ActionBox>
          </Footer>
        </Dialog>
      </ModalLayer>

      <Volume>
        <VolumeInput type="range" min={0} max={100} defaultValue={13} aria-label="音量" />
      </Volume>
    </Page>
  );
}
